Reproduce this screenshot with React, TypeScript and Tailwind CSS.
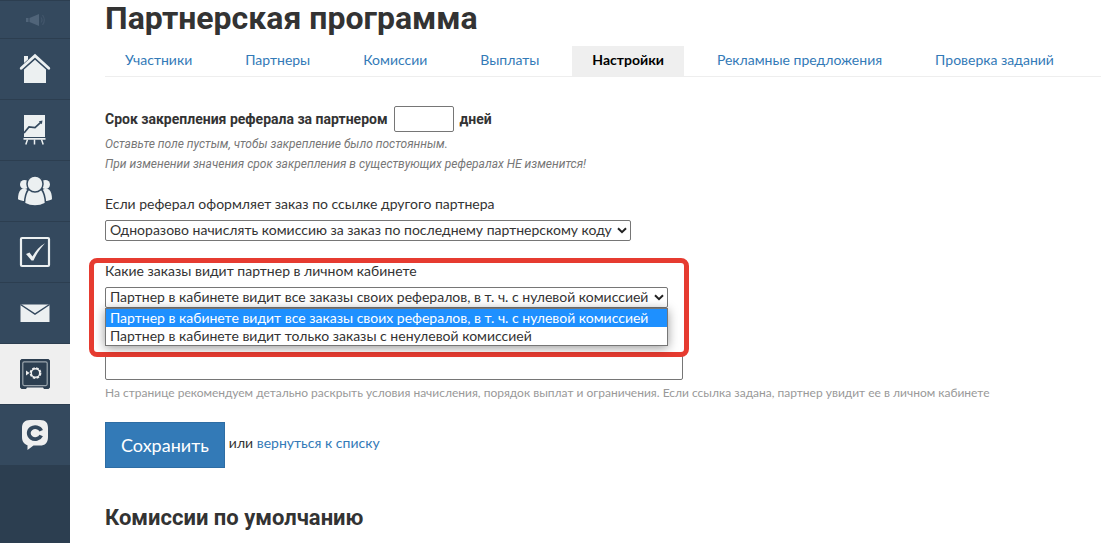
import type { ReactNode } from "react";

type MenuItem = { label: string; icon: ReactNode; active?: boolean };

const menu: MenuItem[] = [
  {
    label: "Главная",
    icon: (
      <>
        <path d="M4 2h4v4L4 9.500z" fill="#ecf0f1" />
        <path d="M15 4.500 26 14.500V29H4V14.500z" fill="#ecf0f1" />
        <path d="M1 15 15 2.500l14 12.500" fill="none" stroke="#34495e" strokeWidth="5" />
        <path d="M1.200 14.200 15 1.600 28.800 14.200" fill="none" stroke="#ecf0f1" strokeWidth="2.800" strokeLinecap="round" />
      </>
    ),
  },
  {
    label: "Статистика",
    icon: (
      <>
        <path d="M4 0h21v22H4zM3.500 23h22v1.800h-22z" fill="#ecf0f1" />
        <path d="M4 18 9 12l6 .6 6-5.400" fill="none" stroke="#34495e" strokeWidth="1.700" />
        <path d="m22.500 5.500-3.700.7 3 3z" fill="#34495e" />
        <path d="M7.500 24.500 5.800 29.500M14.500 24.500v5M21.500 24.500l1.700 5" fill="none" stroke="#ecf0f1" strokeWidth="1.500" />
      </>
    ),
  },
  {
    label: "Пользователи",
    icon: (
      <g fill="#ecf0f1">
        <circle cx="4.500" cy="8.500" r="4.500" />
        <circle cx="25.500" cy="8.500" r="4.500" />
        <path d="M1 13.500c1.500-1 4-1 6 0L5 25c-2.500 0-5-.6-7-1.800 0-4 .8-7.700 3-9.700zM29 13.500c-1.500-1-4-1-6 0L25 25c2.500 0 5-.6 7-1.800 0-4-.8-7.700-3-9.700z" />
        <g stroke="#34495e" strokeWidth="1.500">
          <path d="M8.500 13.500h13c2.500 3 3.800 8 4 14-6.500 3.200-14.500 3.200-21 0 .2-6 1.500-11 4-14z" />
          <circle cx="15" cy="8" r="8" />
        </g>
      </g>
    ),
  },
  {
    label: "Обучение",
    icon: (
      <>
        <rect x="1" y="1" width="28" height="28" rx="1" fill="none" stroke="#ecf0f1" strokeWidth="2.200" />
        <path d="m6 17 3.500-1.500 3 4C15.500 14 19.500 9 25 6.200c-4.500 4.800-8.500 10.500-11.500 17.300h-2z" fill="#ecf0f1" />
      </>
    ),
  },
  {
    label: "Сообщения",
    icon: (
      <>
        <path d="M.5 6.500h29V24H.5z" fill="#ecf0f1" />
        <path d="m.5 6.500 14.500 9.700 14.500-9.700" fill="none" stroke="#34495e" strokeWidth="1.500" />
      </>
    ),
  },
  {
    label: "Продажи",
    active: true,
    icon: (
      <>
        <path d="M1.500 0h27L30 1.500v27L28.500 30H24l-1-1.500H7L6 30H1.500L0 28.500v-27z" fill="#2c3e50" />
        <rect x="2.800" y="2.800" width="24.400" height="23.800" rx="1.500" fill="none" stroke="#9ba5ad" strokeWidth="1.200" />
        <circle cx="15.500" cy="14" r="4.200" fill="none" stroke="#efefef" strokeWidth="1.400" />
        <circle
          cx="15.500"
          cy="14"
          r="5"
          fill="none"
          stroke="#efefef"
          strokeWidth="1.800"
          strokeDasharray="2.600 1.327"
        />
        <path d="m6 11.500 3.500 2.500L6 16.500z" fill="#efefef" />
      </>
    ),
  },
  {
    label: "Чат",
    icon: (
      <>
        <path d="M10 0h10c6 0 8 3 8 8v9c0 6-3 8.500-8 8.500h-6.500L7.500 30v-4.800C4 24 2 21.500 2 17V8c0-5 2.500-8 8-8z" fill="#efefef" />
        <path d="M21.200 10.700A6.500 6 0 1 0 21.200 15.500" fill="none" stroke="#34495e" strokeWidth="3.800" />
      </>
    ),
  },
];

const tabs = [
  "Участники",
  "Партнеры",
  "Комиссии",
  "Выплаты",
  "Настройки",
  "Рекламные предложения",
  "Проверка заданий",
];

const visibility = [
  "Партнер в кабинете видит все заказы своих рефералов, в т. ч. с нулевой комиссией",
  "Партнер в кабинете видит только заказы с ненулевой комиссией",
];

function Sidebar() {
  return (
    <nav className="w-[70px] shrink-0 bg-[#2c3e50]">
      <a
        href="#news"
        aria-label="Новости"
        className="flex h-[39px] items-center justify-center border-y border-[#2c3e50] bg-[#34495e]"
      >
        <svg width="20" height="14" viewBox="0 0 20 14" fill="#506479">
          <path d="M1 5h2.500v4H1zM4.500 5 14 1v12L4.500 9z" />
          <path d="M16 4.500c1.200 1.500 1.200 3.500 0 5M17.500 2c2.200 3 2.200 7 0 10" fill="none" stroke="#42566b" strokeWidth="1.200" />
        </svg>
      </a>
      {menu.map((item) => (
        <a
          key={item.label}
          href="#menu"
          aria-label={item.label}
          className={`flex h-[61px] items-center justify-center border-b border-[#2c3e50] ${
            item.active ? "bg-[#efefef]" : "bg-[#34495e]"
          }`}
        >
          <svg width="30" height="30" viewBox="0 0 30 30" className="overflow-visible">
            {item.icon}
          </svg>
        </a>
      ))}
    </nav>
  );
}

function Select({ id, options }: { id: string; options: string[] }) {
  return (
    <div className="relative w-fit">
      <select
        id={id}
        className="block h-[21px] appearance-none rounded-xs border border-[#767676] bg-white pr-[18px] pb-0.5 pl-1 leading-[17px]"
      >
        {options.map((option) => (
          <option key={option}>{option}</option>
        ))}
      </select>
      <svg
        className="pointer-events-none absolute top-[7px] right-1"
        width="10"
        height="7"
        viewBox="0 0 10 7"
        fill="none"
        stroke="#222"
        strokeWidth="2"
      >
        <path d="m1 1.200 4 4 4-4" />
      </svg>
    </div>
  );
}

export default function App() {
  return (
    <div className="flex min-h-screen bg-white font-['Lato','Open_Sans',sans-serif] text-sm leading-5 text-[#333]">
      <Sidebar />

      <main className="min-w-0 flex-1 pl-[35px]">
        <h1 className="font-['Roboto',sans-serif] text-[32px] leading-9 font-bold">Партнерская программа</h1>

        <nav className="mt-2.5 flex gap-[13px] border-b border-[#eee] whitespace-nowrap">
          {tabs.map((tab) => (
            <a
              key={tab}
              href="#tab"
              className={`px-5 pt-1 pb-1.5 ${
                tab === "Настройки" ? "bg-[#efefef] font-bold text-black" : "text-[#337ab7]"
              }`}
            >
              {tab}
            </a>
          ))}
        </nav>

        <form onSubmit={(e) => e.preventDefault()}>
          <div className="mt-[29px] flex items-center gap-1.5 font-['Roboto',sans-serif] font-bold">
            <label htmlFor="days">Срок закрепления реферала за партнером</label>
            <input id="days" type="text" className="h-[26px] w-[60px] rounded-xs border border-[#767676] px-1" />
            <span>дней</span>
          </div>
          <div className="mt-0.5 font-['Roboto',sans-serif] text-xs leading-5 text-[#777] italic">
            <p>Оставьте поле пустым, чтобы закрепление было постоянным.</p>
            <p>При изменении значения срок закрепления в существующих рефералах НЕ изменится!</p>
          </div>

          <div className="mt-5">
            <label htmlFor="other" className="mb-1.5 block">
              Если реферал оформляет заказ по ссылке другого партнера
            </label>
            <Select id="other" options={["Одноразово начислять комиссию за заказ по последнему партнерскому коду"]} />
          </div>

          <div className="relative mt-5 w-fit">
            <label htmlFor="orders" className="mb-1.5 block">
              Какие заказы видит партнер в личном кабинете
            </label>
            <Select id="orders" options={visibility} />

            {/* Раскрытый список */}
            <ul className="absolute inset-x-0 top-full z-10 border border-[#767676] bg-white leading-[18px] shadow-[0_2px_10px_rgba(0,0,0,0.4)]">
              {visibility.map((option, i) => (
                <li key={option} className={`px-1 ${i === 0 ? "bg-[#1e90ff] text-white" : ""}`}>
                  {option}
                </li>
              ))}
            </ul>

            {/* Рамка-выделение */}
            <div className="pointer-events-none absolute -top-[3px] -left-4 h-[99px] w-[600px] rounded-lg border-[5px] border-[#e63b30]" />
          </div>

          <input
            type="text"
            aria-label="Ссылка на страницу"
            className="mt-[46px] block h-[26px] w-[578px] rounded-xs border border-[#767676] px-1"
          />
          <p className="mt-[3px] text-xs leading-5 text-[#999]">
            На странице рекомендуем детально раскрыть условия начисления, порядок выплат и ограничения. Если ссылка
            задана, партнер увидит ее в личном кабинете
          </p>

          <div className="mt-[19px] flex items-center gap-1">
            <button type="submit" className="h-[46px] border border-[#2e6da4] bg-[#337ab7] px-[15px] text-lg text-white">
              Сохранить
            </button>
            <span className="pb-1">
              или{" "}
              <a href="#list" className="text-[#337ab7]">
                вернуться к списку
              </a>
            </span>
          </div>
        </form>

        <h2 className="mt-9 font-['Roboto',sans-serif] text-[22px] leading-7 font-bold">Комиссии по умолчанию</h2>
      </main>
    </div>
  );
}
